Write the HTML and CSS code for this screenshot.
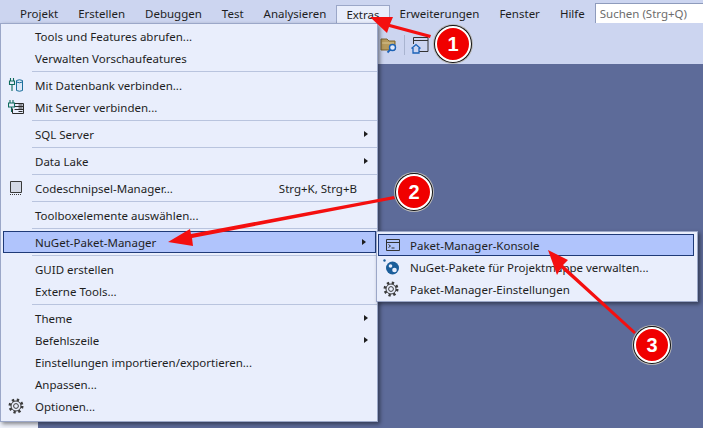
FILE: index.html
```html
<!DOCTYPE html>
<html>
  <head>
    <title>Extras - NuGet-Paket-Manager</title>
    <link rel="stylesheet" href="styles.css">
  </head>
  <body>
    <svg class="defs" width="0" height="0">
      <symbol id="gear" viewBox="0 0 16 16">
        <circle cx="8" cy="8" r="6" fill="none" stroke="#3a3a3a" stroke-width="3" stroke-dasharray="2.2 2.52"></circle>
        <circle cx="8" cy="8" r="5" fill="#e9eefc" stroke="#3a3a3a" stroke-width="1"></circle>
        <circle cx="8" cy="8" r="2.4" fill="none" stroke="#3a3a3a" stroke-width="1"></circle>
      </symbol>
    </svg>

    <div class="app">
      <div class="menubar">
        <span class="top-item">Projekt</span>
        <span class="top-item">Erstellen</span>
        <span class="top-item">Debuggen</span>
        <span class="top-item">Test</span>
        <span class="top-item">Analysieren</span>
        <span class="top-item active">Extras</span>
        <span class="top-item">Erweiterungen</span>
        <span class="top-item">Fenster</span>
        <span class="top-item">Hilfe</span>
        <div class="search">Suchen (Strg+Q)</div>
      </div>

      <div class="toolbar">
        <svg class="tool-icon" width="18" height="18" viewBox="0 0 18 18">
          <path d="M1 3h6l2 2h6v9H1z" fill="#b69a5c" stroke="#7d6430"></path>
          <path d="M2 7h12" stroke="#d9c692"></path>
          <circle cx="12.5" cy="11.5" r="3" fill="#e0e9fb" stroke="#1a62b8" stroke-width="1.4"></circle>
          <path d="M10.3 13.7L7.5 16.5" stroke="#1a62b8" stroke-width="1.8"></path>
        </svg>
        <span class="tool-sep"></span>
        <svg class="tool-icon" width="18" height="18" viewBox="0 0 18 18">
          <path d="M5 15.5h12V1.500H2.500V8" fill="none" stroke="#333"></path>
          <path d="M2.500 4.500H17" stroke="#333"></path>
          <path d="M.5 12.500L5 8.500l4.500 4M2 12v5h6v-5" fill="#ccd5f0" stroke="#1a62b8" stroke-width="1.300"></path>
        </svg>
      </div>

      <div class="workspace">
        <div class="side-strip"></div>
      </div>
    </div>

    <div class="menu main-menu">
      <div class="item"><span class="icon"></span><span class="label">Tools und Features abrufen...</span></div>
      <div class="item"><span class="icon"></span><span class="label">Verwalten Vorschaufeatures</span></div>
      <div class="sep"></div>
      <div class="item">
        <span class="icon">
          <svg width="16" height="16" viewBox="0 0 16 16">
            <path d="M2.500 1v3M5.500 1v3M1.500 4h5v3.500H1.500zM4 7.500V14" fill="none" stroke="#0e6b5c" stroke-width="1.100"></path>
            <path d="M8.500 3.500q3-1.500 6 0v10q-3 1.500-6 0z" fill="#dbe8f7" stroke="#1c6f9c"></path>
            <path d="M8.500 5q3 1.500 6 0" fill="none" stroke="#1c6f9c"></path>
          </svg>
        </span>
        <span class="label">Mit Datenbank verbinden...</span>
      </div>
      <div class="item">
        <span class="icon">
          <svg width="16" height="16" viewBox="0 0 16 16">
            <path d="M6 4.500h9.500v10H4.500v-5M6.500 7.500h9M6.500 10.500h9M10.500 6h4M10.500 9h4M10.500 12.500h4" fill="none" stroke="#2b2b2b"></path>
            <path d="M2 1v3M5 1v3M.5 4h6v4H.5zM3.500 8v5" fill="#e9eefc" stroke="#0e6b5c" stroke-width="1.100"></path>
          </svg>
        </span>
        <span class="label">Mit Server verbinden...</span>
      </div>
      <div class="sep"></div>
      <div class="item"><span class="icon"></span><span class="label">SQL Server</span><span class="caret"></span></div>
      <div class="sep"></div>
      <div class="item"><span class="icon"></span><span class="label">Data Lake</span><span class="caret"></span></div>
      <div class="sep"></div>
      <div class="item">
        <span class="icon">
          <svg width="16" height="16" viewBox="0 0 16 16">
            <path d="M2.500 1.500h11v11h-11z" fill="#d4d9e6" stroke="#3a3a3a"></path>
            <path d="M2 14.500h12" stroke="#3a3a3a" stroke-dasharray="1 1"></path>
          </svg>
        </span>
        <span class="label">Codeschnipsel-Manager...</span>
        <span class="shortcut">Strg+K, Strg+B</span>
      </div>
      <div class="sep"></div>
      <div class="item"><span class="icon"></span><span class="label">Toolboxelemente auswählen...</span></div>
      <div class="sep"></div>
      <div class="item selected"><span class="icon"></span><span class="label">NuGet-Paket-Manager</span><span class="caret"></span></div>
      <div class="sep"></div>
      <div class="item"><span class="icon"></span><span class="label">GUID erstellen</span></div>
      <div class="item"><span class="icon"></span><span class="label">Externe Tools...</span></div>
      <div class="sep"></div>
      <div class="item"><span class="icon"></span><span class="label">Theme</span><span class="caret"></span></div>
      <div class="item"><span class="icon"></span><span class="label">Befehlszeile</span><span class="caret"></span></div>
      <div class="item"><span class="icon"></span><span class="label">Einstellungen importieren/exportieren...</span></div>
      <div class="item"><span class="icon"></span><span class="label">Anpassen...</span></div>
      <div class="item">
        <span class="icon"><svg width="16" height="16"><use href="#gear"></use></svg></span>
        <span class="label">Optionen...</span>
      </div>
    </div>

    <div class="menu sub-menu">
      <div class="item selected">
        <span class="icon">
          <svg width="16" height="16" viewBox="0 0 16 16">
            <path d="M1.500 2.500h13v11h-13zM1.500 5.500h13" fill="none" stroke="#333"></path>
            <path d="M3.500 7.500l2 1.500-2 1.500M6.500 11h3" fill="none" stroke="#333"></path>
          </svg>
        </span>
        <span class="label">Paket-Manager-Konsole</span>
      </div>
      <div class="item">
        <span class="icon">
          <svg width="16" height="16" viewBox="0 0 16 16">
            <circle cx="1.500" cy="1.500" r="1.200" fill="#1b5e9a"></circle>
            <circle cx="9.500" cy="9" r="6.500" fill="#1b5e9a"></circle>
            <circle cx="7.500" cy="7" r="1.800" fill="#e9eefc"></circle>
            <circle cx="11.500" cy="11" r="2.300" fill="#e9eefc"></circle>
          </svg>
        </span>
        <span class="label">NuGet-Pakete für Projektmappe verwalten...</span>
      </div>
      <div class="item">
        <span class="icon"><svg width="16" height="16"><use href="#gear"></use></svg></span>
        <span class="label">Paket-Manager-Einstellungen</span>
      </div>
    </div>

    <svg class="arrows" width="703" height="428" viewBox="0 0 703 428">
      <path d="M370 17L393 17L390 24L431 35L430 38L389 27L387 33z"></path>
      <path d="M168 242L190 229L191 234L394 196L395 199L192 238L193 246z"></path>
      <path d="M548 250L568 260L563 265L636 332L634 334L561 268L557 275z"></path>
    </svg>

    <div class="badge badge-one">1</div>
    <div class="badge badge-two">2</div>
    <div class="badge badge-three">3</div>
  </body>
</html>
```

FILE: styles.css
```css
body {
  margin: 0;
  background-color: #5d6b99;
  font-family: "Noto Sans", Arial, sans-serif;
  font-size: 11.5px;
  color: #1e1e1e;
  overflow: hidden;
}
.defs {
  position: absolute;
}
.app {
  width: 703px;
  height: 428px;
  display: flex;
  flex-direction: column;
}
.menubar {
  height: 23px;
  padding-top: 5px;
  box-sizing: border-box;
  background-color: #ccd5f0;
  display: flex;
  padding-left: 10px;
  white-space: nowrap;
}
.top-item {
  height: 18px;
  line-height: 18px;
  padding: 0 10px;
  box-sizing: border-box;
}
.top-item.active {
  background-color: #e9eefc;
  border: 1px solid #9ba7c8;
  border-bottom: none;
  line-height: 17px;
  padding: 0 9px;
}
.search {
  height: 21px;
  line-height: 19px;
  width: 130px;
  flex-shrink: 0;
  margin-top: -2px;
  margin-left: auto;
  padding-left: 4px;
  box-sizing: border-box;
  background-color: #ffffff;
  border: 1px solid #8e9bbc;
  color: #6d6d6d;
}
.toolbar {
  height: 41px;
  background-color: #ccd5f0;
  display: flex;
  align-items: center;
  padding-left: 380px;
  padding-top: 2px;
  box-sizing: border-box;
}
.tool-sep {
  width: 1px;
  height: 20px;
  background-color: #a9b4d0;
  margin: 0 6px;
}
.workspace {
  flex: 1;
  display: flex;
  align-items: flex-end;
}
.side-strip {
  width: 38px;
  height: 8px;
  background-color: #eef1fa;
}
.menu {
  position: absolute;
  box-sizing: border-box;
  background-color: #e9eefc;
  border: 1px solid #9ba7c8;
  box-shadow: 2px 2px 4px rgba(0, 0, 0, 0.45);
}
.main-menu {
  left: 0;
  top: 23px;
  width: 378px;
  height: 399px;
  padding: 1px 0 0 2px;
}
.sub-menu {
  left: 376px;
  top: 231px;
  width: 322px;
  height: 71px;
  padding: 2px 2px 0 1px;
}
.item {
  height: 22px;
  display: flex;
  align-items: center;
  box-sizing: border-box;
  white-space: nowrap;
}
.item.selected {
  background-color: #b0c4fc;
  border: 1px solid #1f3a78;
  margin-right: 1px;
}
.icon {
  width: 32px;
  flex-shrink: 0;
  display: flex;
  justify-content: center;
  padding-right: 6px;
  box-sizing: border-box;
}
.item.selected .icon {
  width: 31px;
  padding-right: 4px;
}
.label {
  flex: 1;
}
.shortcut {
  margin-right: 20px;
}
.caret {
  width: 0;
  height: 0;
  margin-right: 9px;
  border-left: 4px solid #1e1e1e;
  border-top: 3.5px solid transparent;
  border-bottom: 3.5px solid transparent;
}
.sep {
  height: 1px;
  margin: 2px 0 2px 29px;
  background-color: #b9c4de;
}
.arrows {
  position: absolute;
  left: 0;
  top: 0;
}
.arrows path {
  fill: #f40f0f;
}
.badge {
  position: absolute;
  width: 32px;
  height: 32px;
  line-height: 32px;
  text-align: center;
  border-radius: 50%;
  background-color: #f00000;
  color: #ffffff;
  font-family: "Liberation Sans", Arial, sans-serif;
  font-weight: bold;
  font-size: 20px;
  border: 2px solid #ffffff;
  box-shadow: 0 0 0 1px #111111, 0 0 0 2px #b8b8b8;
}
.badge-one {
  left: 435px;
  top: 26px;
}
.badge-two {
  left: 396px;
  top: 174px;
}
.badge-three {
  left: 634px;
  top: 327px;
}
```
